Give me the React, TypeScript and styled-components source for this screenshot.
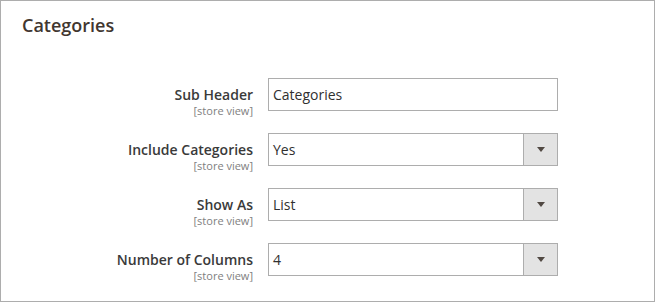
import React, { FC } from 'react';
import styled, { createGlobalStyle } from 'styled-components';

const GlobalStyle = createGlobalStyle`
    html, body {
        margin: 0;
        padding: 0;
        background: #ffffff;
    }

    body {
        font-family: "Open Sans", "Liberation Sans", sans-serif;
    }
`;

type Field = {
    label: string;
    value: string;
    select?: boolean;
};

const fields: Field[] = [
    { label: 'Sub Header', value: 'Categories' },
    { label: 'Include Categories', value: 'Yes', select: true },
    { label: 'Show As', value: 'List', select: true },
    { label: 'Number of Columns', value: '4', select: true },
];

const App: FC = () => {
    return (
        <>
            <GlobalStyle />
            <Panel>
                <Title>Categories</Title>

                <Fields>
                    {
                        fields.map((field) => (
                            <Row key={field.label}>
                                <LabelBox>
                                    <LabelText>{field.label}</LabelText>
                                    <Scope>[store view]</Scope>
                                </LabelBox>

                                <Control>
                                    <Value>{field.value}</Value>
                                    {field.select && (
                                        <DropButton>
                                            <Arrow />
                                        </DropButton>
                                    )}
                                </Control>
                            </Row>
                        ))
                    }
                </Fields>
            </Panel>
        </>
    )
}

export default App

const Panel = styled.div`
    box-sizing: border-box;
    width: 655px;
    height: 302px;
    border: 1px solid #adadad;
    padding-top: 15px;
    background: #ffffff;
`;

const Title = styled.h2`
    margin: 0 0 0 21px;
    font-size: 18px;
    line-height: 18px;
    font-weight: 600;
    color: #41362f;
`;

const Fields = styled.div`
    display: flex;
    flex-direction: column;
    gap: 22px;
    margin-top: 44px;
`;

const Row = styled.div`
    display: flex;
    gap: 15px;
    height: 33px;
`;

const LabelBox = styled.div`
    width: 252px;
    padding-top: 8px;
    display: flex;
    flex-direction: column;
    align-items: flex-end;
`;

const LabelText = styled.span`
    font-size: 14px;
    line-height: 18px;
    font-weight: 600;
    color: #3a3a3a;
`;

const Scope = styled.span`
    font-size: 11px;
    line-height: 13px;
    color: #808080;
`;

const Control = styled.div`
    box-sizing: border-box;
    width: 290px;
    height: 33px;
    display: flex;
    align-items: stretch;
    border: 1px solid #adadad;
    background: #ffffff;
`;

const Value = styled.span`
    flex: 1;
    display: flex;
    align-items: center;
    padding: 0 4px;
    font-size: 14px;
    color: #303030;
`;

const DropButton = styled.span`
    width: 33px;
    border-left: 1px solid #adadad;
    background: #e3e3e3;
    display: flex;
    align-items: center;
    justify-content: center;
`;

const Arrow = styled.span`
    width: 0;
    height: 0;
    border-left: 4px solid transparent;
    border-right: 4px solid transparent;
    border-top: 5px solid #514943;
`;
